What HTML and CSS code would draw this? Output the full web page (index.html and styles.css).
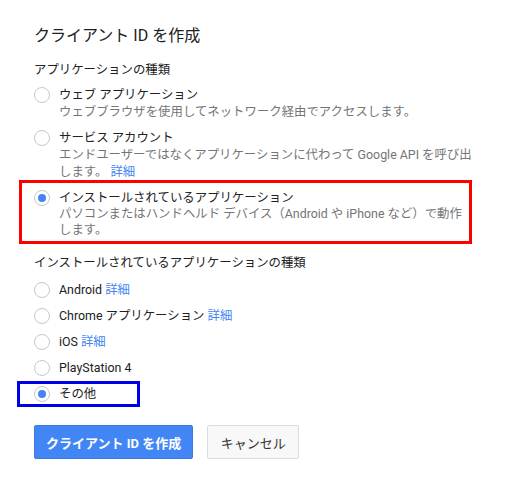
FILE: index.html
```html
<!DOCTYPE html>
<html lang="ja">
<head>
    <meta charset="UTF-8">
    <meta name="viewport" content="width=device-width, initial-scale=1.0">
    <title>クライアント ID を作成</title>
    <link rel="stylesheet" href="styles.css">
</head>
<body>
    <div class="page">
        <h1>クライアント ID を作成</h1>

        <div class="group-title">アプリケーションの種類</div>
        <div class="options">
            <label class="option">
                <span class="radio"></span>
                <span class="text">
                    <span class="name">ウェブ アプリケーション</span>
                    <span class="desc">ウェブブラウザを使用してネットワーク経由でアクセスします。</span>
                </span>
            </label>
            <label class="option">
                <span class="radio"></span>
                <span class="text">
                    <span class="name">サービス アカウント</span>
                    <span class="desc">エンドユーザーではなくアプリケーションに代わって Google API を呼び出します。 <a href="#">詳細</a></span>
                </span>
            </label>
            <label class="option tight">
                <span class="radio checked"></span>
                <span class="text">
                    <span class="name">インストールされているアプリケーション</span>
                    <span class="desc">パソコンまたはハンドヘルド デバイス（Android や iPhone など）で動作します。</span>
                </span>
                <span class="mark mark-red"></span>
            </label>
        </div>

        <div class="group-title second">インストールされているアプリケーションの種類</div>
        <div class="options compact">
            <label class="option">
                <span class="radio"></span>
                <span class="name">Android <a href="#">詳細</a></span>
            </label>
            <label class="option">
                <span class="radio"></span>
                <span class="name">Chrome アプリケーション <a href="#">詳細</a></span>
            </label>
            <label class="option">
                <span class="radio"></span>
                <span class="name">iOS <a href="#">詳細</a></span>
            </label>
            <label class="option">
                <span class="radio"></span>
                <span class="name">PlayStation 4</span>
            </label>
            <label class="option">
                <span class="radio checked"></span>
                <span class="name">その他</span>
                <span class="mark mark-blue"></span>
            </label>
        </div>

        <div class="actions">
            <button class="btn btn-primary">クライアント ID を作成</button>
            <button class="btn">キャンセル</button>
        </div>
    </div>
</body>
</html>
```

FILE: styles.css
```css
body {
    margin: 0;
    background-color: #fff;
    font-family: Roboto, "Noto Sans CJK JP", sans-serif;
    font-size: 12.4px;
    color: #212121;
}

.page {
    padding: 25px 0 0 34px;
    width: 438px;
}

h1 {
    margin: 0 0 14px;
    font-size: 16px;
    font-weight: normal;
    line-height: 22px;
    color: #212121;
}

.group-title {
    line-height: 18px;
    margin-bottom: 7px;
}

.group-title.second {
    margin-top: 16px;
    margin-bottom: 9px;
}

.options {
    display: flex;
    flex-direction: column;
    gap: 9px;
}

.option {
    position: relative;
    display: flex;
    align-items: flex-start;
    gap: 9px;
    cursor: pointer;
}

.compact .option {
    align-items: center;
}

.text {
    display: flex;
    flex-direction: column;
    flex: 1;
}

.name {
    line-height: 17px;
}

.desc {
    line-height: 17px;
    color: #757575;
}

.tight .desc {
    line-height: 16px;
}

a {
    color: #4285f4;
    text-decoration: none;
}

.radio {
    flex: none;
    width: 14px;
    height: 14px;
    margin-top: 1px;
    border: 1px solid #c8c8c8;
    border-radius: 50%;
    display: flex;
    align-items: center;
    justify-content: center;
}

.compact .radio {
    margin-top: 0;
}

.radio.checked::after {
    content: "";
    width: 8px;
    height: 8px;
    border-radius: 50%;
    background-color: #4285f4;
}

.mark {
    position: absolute;
    pointer-events: none;
}

.mark-red {
    top: -9px;
    left: -15px;
    right: 0;
    bottom: -6px;
    border: 3px solid #f00;
}

.mark-blue {
    top: -4px;
    left: -17px;
    width: 117px;
    bottom: -5px;
    border: 3px solid #0000e6;
}

.actions {
    display: flex;
    gap: 14px;
    margin-top: 23px;
}

.btn {
    height: 34px;
    padding: 0 12.5px;
    font-family: inherit;
    font-size: 13px;
    color: #333;
    background-color: #f8f8f8;
    border: 1px solid #dcdcdc;
    border-radius: 2px;
}

.btn-primary {
    padding: 0 11px;
    color: #fff;
    font-weight: bold;
    background-color: #4285f4;
    border-color: #3b78e7;
}
```
